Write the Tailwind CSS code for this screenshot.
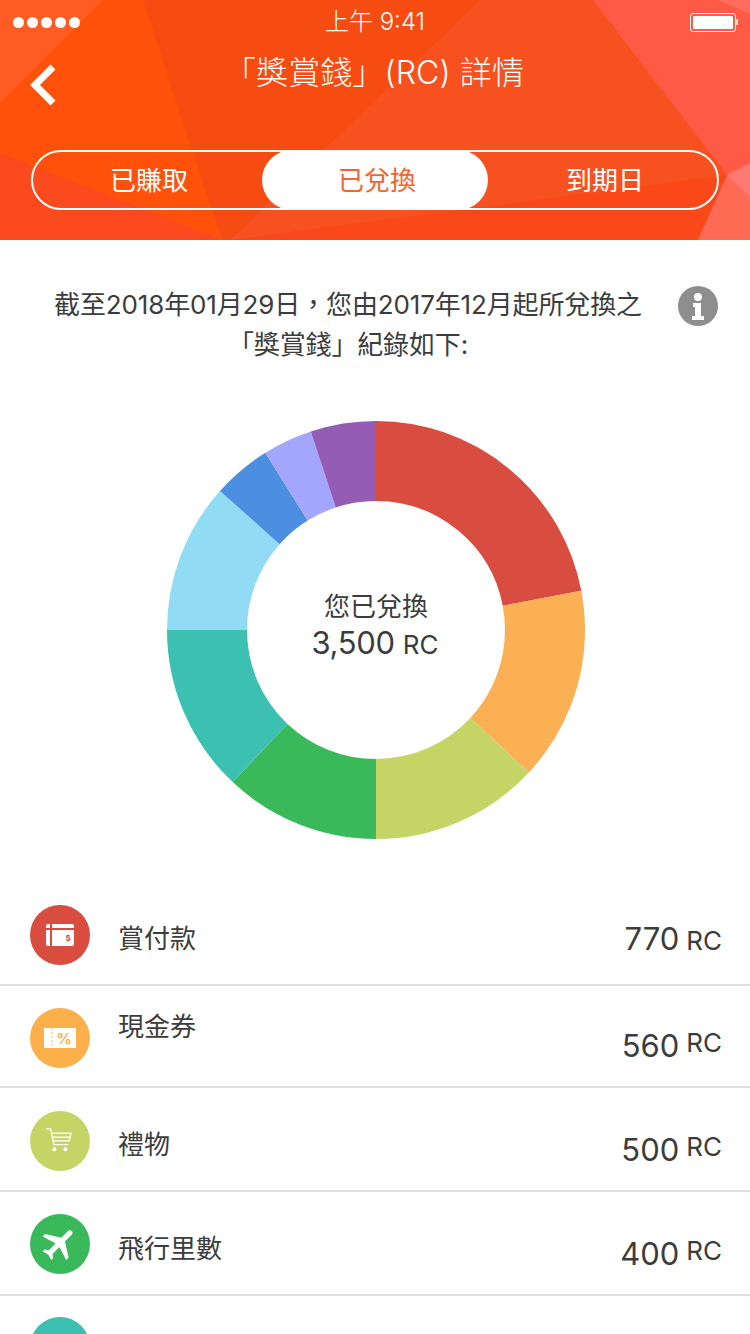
<!DOCTYPE html>
<html lang="zh-Hant">
<head>
    <meta charset="UTF-8">
    <meta name="viewport" content="width=device-width, initial-scale=1.0">
    <title>獎賞錢詳情</title>
    <script src="https://cdn.jsdelivr.net/npm/@tailwindcss/browser@4"></script>
</head>
<body class="bg-white text-[#3c3c3c] font-[family-name:'Inter','Noto_Sans_CJK_TC',sans-serif]">
<div class="w-[750px] h-[1334px] overflow-hidden">

    <!-- Header -->
    <header class="relative h-[240px] bg-[#f64c12] text-white overflow-hidden">
        <svg class="absolute inset-0" width="750" height="240" viewBox="0 0 750 240">
            <polygon points="103,0 143,0 222,240 0,240 0,103" fill="#ff510a"/>
            <polygon points="0,0 103,0 0,103" fill="#ff5c24"/>
            <polygon points="0,153 222,240 0,240" fill="#fb4a1e"/>
            <polygon points="480,0 593,0 727,175 230,240" fill="#f75120"/>
            <polygon points="727,177 698,240 230,240" fill="#fb4819"/>
            <polygon points="593,0 750,0 750,163 727,175" fill="#ff5a46"/>
            <polygon points="718,0 750,0 750,14" fill="#ff6e5c"/>
            <polygon points="727,175 750,163 750,240 698,240" fill="#ff6a55"/>
            <polygon points="727,175 750,163 750,197" fill="#ff7a70"/>
        </svg>

        <div class="relative">
            <!-- Status bar -->
            <div class="flex items-center justify-between h-[44px] pl-[13px] pr-[12px]">
                <div class="flex gap-[3px]">
                    <span class="w-[11px] h-[11px] rounded-full bg-white"></span>
                    <span class="w-[11px] h-[11px] rounded-full bg-white"></span>
                    <span class="w-[11px] h-[11px] rounded-full bg-white"></span>
                    <span class="w-[11px] h-[11px] rounded-full bg-white"></span>
                    <span class="w-[11px] h-[11px] rounded-full bg-white"></span>
                </div>
                <div class="text-[24px] font-light leading-[46px] ml-[-20px]">上午 9:41</div>
                <div class="flex items-center">
                    <div class="w-[46px] h-[19px] border border-white rounded-[3px] p-[2px]">
                        <div class="w-full h-full bg-white rounded-[1px]"></div>
                    </div>
                    <div class="w-[2px] h-[6px] bg-white/80"></div>
                </div>
            </div>

            <!-- Title -->
            <div class="flex h-[62px] pl-[30px]">
                <svg class="mt-[20px] shrink-0" width="26" height="42" viewBox="0 0 26 42" fill="none">
                    <path d="M23 3 L5 21 L23 39" stroke="white" stroke-width="7"/>
                </svg>
                <h1 class="w-[640px] ml-[-2px] text-center text-[32px] font-light leading-[58px] tracking-[0.1px]">「獎賞錢」(RC) 詳情</h1>
            </div>

            <!-- Segmented control -->
            <div class="mt-[44px] mx-[31px] h-[60px] border-2 border-white rounded-full grid grid-cols-3 grid-rows-[56px] items-start text-[26px] leading-[58px] text-center">
                <div class="pl-[4px]">已賺取</div>
                <div class="bg-white text-[#f9622b] rounded-full h-[60px] mt-[-2px] mx-[1px] leading-[62px] pl-[4px]">已兌換</div>
                <div class="pl-[4px]">到期日</div>
            </div>
        </div>
    </header>

    <!-- Intro -->
    <section class="flex items-start pt-[45px] pl-[30px]">
        <p class="w-[636px] text-center text-[26px] leading-[40px] tracking-[-0.14px]">截至2018年01月29日<span class="leading-[0] font-[family-name:'Noto_Sans_CJK_SC',sans-serif]">，</span>您由2017年12月起所兌換之<br>「獎賞錢」紀錄如下:</p>
        <svg class="ml-[12px] mt-[1px]" width="40" height="40" viewBox="0 0 40 40">
            <circle cx="20" cy="20" r="20" fill="#8e8e8e"/>
            <circle cx="20" cy="11" r="4" fill="white"/>
            <path d="M15 17h8v13h3v4H14v-4h3v-9h-2z" fill="white"/>
        </svg>
    </section>

    <!-- Donut -->
    <section class="relative w-[418px] h-[418px] mt-[56px] ml-[167px]">
        <svg width="418" height="418" viewBox="0 0 418 418" fill="none" stroke-width="80">
            <g transform="rotate(-90 209 209)">
                <circle cx="209" cy="209" r="169" pathLength="360" stroke="#d94c40" stroke-dasharray="79.2 360"/>
                <circle cx="209" cy="209" r="169" pathLength="360" stroke="#fbb054" stroke-dasharray="53.8 360" stroke-dashoffset="-79.2"/>
                <circle cx="209" cy="209" r="169" pathLength="360" stroke="#c4d566" stroke-dasharray="47 360" stroke-dashoffset="-133"/>
                <circle cx="209" cy="209" r="169" pathLength="360" stroke="#3ab95a" stroke-dasharray="43.3 360" stroke-dashoffset="-180"/>
                <circle cx="209" cy="209" r="169" pathLength="360" stroke="#3cc0b2" stroke-dasharray="46.7 360" stroke-dashoffset="-223.3"/>
                <circle cx="209" cy="209" r="169" pathLength="360" stroke="#92dbf4" stroke-dasharray="41.7 360" stroke-dashoffset="-270"/>
                <circle cx="209" cy="209" r="169" pathLength="360" stroke="#4c8fe0" stroke-dasharray="16.3 360" stroke-dashoffset="-311.7"/>
                <circle cx="209" cy="209" r="169" pathLength="360" stroke="#a4a6fe" stroke-dasharray="13.8 360" stroke-dashoffset="-328"/>
                <circle cx="209" cy="209" r="169" pathLength="360" stroke="#955cb6" stroke-dasharray="18.2 360" stroke-dashoffset="-341.8"/>
            </g>
        </svg>
        <div class="absolute inset-0 flex flex-col items-center justify-center pb-[9px]">
            <div class="text-[26px] leading-[36px]">您已兌換</div>
            <div class="flex items-baseline gap-[8px] leading-[36px] pr-[2px]">
                <span class="text-[31px] tracking-[-0.3px]">3,500</span><span class="text-[26px]">RC</span>
            </div>
        </div>
    </section>

    <!-- Breakdown list -->
    <section class="mt-[47px]">
        <div class="flex items-start h-[100px] border-b-2 border-[#e0e0e0]">
            <div class="flex items-center justify-center w-[60px] h-[60px] mt-[19px] ml-[30px] rounded-full bg-[#d94c40]">
                <svg width="30" height="24" viewBox="0 0 30 24">
                    <rect x="1" y="1" width="28" height="22" rx="2" fill="white"/>
                    <rect x="5" y="0" width="2" height="24" fill="#d94c40"/>
                    <rect x="0" y="5" width="30" height="2" fill="#d94c40"/>
                    <text x="23" y="18" text-anchor="middle" font-size="8" font-weight="700" fill="#d94c40">$</text>
                </svg>
            </div>
            <div class="ml-[28px] mt-[35px] text-[26px] leading-[36px]">賞付款</div>
            <div class="ml-auto mr-[28px] mt-[27px] flex items-baseline gap-[7px]">
                <span class="text-[31px] leading-[52px]">770</span><span class="text-[26px]">RC</span>
            </div>
        </div>

        <div class="flex items-start h-[102px] border-b-2 border-[#e0e0e0]">
            <div class="flex items-center justify-center w-[60px] h-[60px] mt-[22px] ml-[30px] rounded-full bg-[#fbb04a]">
                <svg width="32" height="20" viewBox="0 0 32 20">
                    <rect x="0" y="0" width="32" height="20" fill="white"/>
                    <path d="M8 0v20" stroke="#fbb04a" stroke-width="1" stroke-dasharray="2 2"/>
                    <text x="20" y="16" text-anchor="middle" font-size="15" font-weight="700" fill="#fbb04a">%</text>
                </svg>
            </div>
            <div class="ml-[28px] mt-[23px] text-[26px] leading-[36px]">現金券</div>
            <div class="ml-auto mr-[28px] mt-[34px] flex items-end gap-[7px]">
                <span class="text-[31px] leading-[52px]">560</span><span class="text-[26px] leading-[32px] mb-[13px]">RC</span>
            </div>
        </div>

        <div class="flex items-start h-[104px] border-b-2 border-[#e0e0e0]">
            <div class="flex items-center justify-center w-[60px] h-[60px] mt-[23px] ml-[30px] rounded-full bg-[#c4d566]">
                <svg class="mr-[2px] mb-[2px]" width="28" height="24" viewBox="0 0 30 26" fill="none" stroke="white" stroke-width="1.500">
                    <path d="M1 1h5l3.500 17h15.500"/>
                    <path d="M6.800 5.500h21.200l-2 8.500H8.500M7.800 10h19"/>
                    <circle cx="10" cy="23" r="2.200" fill="white" stroke="none"/>
                    <circle cx="22" cy="23" r="2.200" fill="white" stroke="none"/>
                </svg>
            </div>
            <div class="ml-[28px] mt-[39px] text-[26px] leading-[36px]">禮物</div>
            <div class="ml-auto mr-[28px] mt-[36px] flex items-end gap-[7px]">
                <span class="text-[31px] leading-[52px]">500</span><span class="text-[26px] leading-[32px] mb-[13px]">RC</span>
            </div>
        </div>

        <div class="flex items-start h-[104px] border-b-2 border-[#e0e0e0]">
            <div class="flex items-center justify-center w-[60px] h-[60px] mt-[22px] ml-[30px] rounded-full bg-[#3ab95a]">
                <svg width="42" height="42" viewBox="0 0 24 24" fill="white">
                    <path transform="rotate(45 12 12)" d="M21 16v-2l-8-5V3.500c0-.83-.67-1.500-1.500-1.500S10 2.670 10 3.500V9l-8 5v2l8-2.500V19l-2 1.500V22l3.500-1 3.500 1v-1.500L13 19v-5.500l8 2.500z"/>
                </svg>
            </div>
            <div class="ml-[28px] mt-[39px] text-[26px] leading-[36px]">飛行里數</div>
            <div class="ml-auto mr-[28px] mt-[36px] flex items-end gap-[7px]">
                <span class="text-[31px] leading-[52px]">400</span><span class="text-[26px] leading-[32px] mb-[13px]">RC</span>
            </div>
        </div>

        <div class="flex items-start h-[60px]">
            <div class="w-[60px] h-[60px] mt-[21px] ml-[30px] rounded-full bg-[#3cc0b2]"></div>
        </div>
    </section>
</div>
</body>
</html>
